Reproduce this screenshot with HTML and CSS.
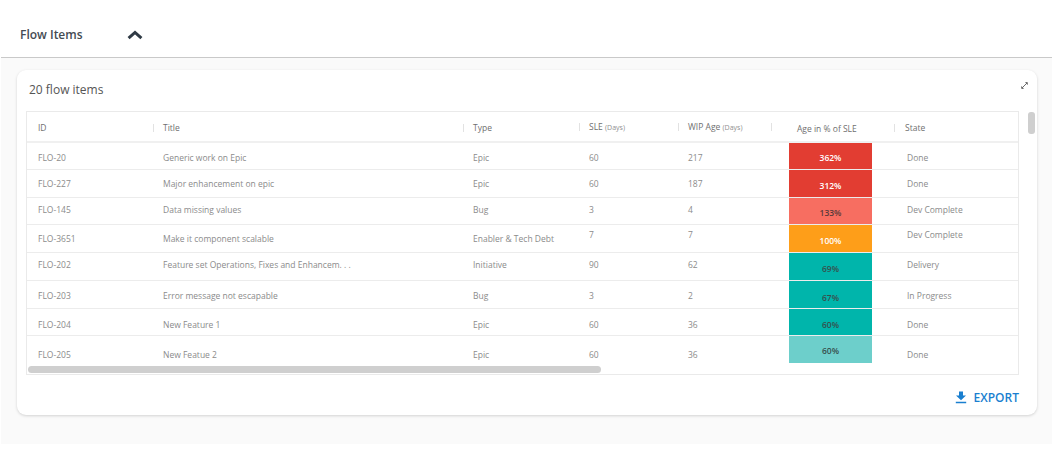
FILE: index.html
```html
<!DOCTYPE html>
<html lang="en">
<head>
<meta charset="utf-8">
<title>Flow Items</title>
<link rel="stylesheet" href="styles.css">
</head>
<body>
<header class="topbar">
  <h1 class="topbar-title">Flow Items</h1>
  <svg class="chevron" width="16" height="10" viewBox="0 0 16 10"><path d="M1.6 8.2 L8 2.4 L14.4 8.2" fill="none" stroke="#2f3a45" stroke-width="3"/></svg>
</header>
<main class="stage">
  <section class="card">
    <div class="card-head">
      <h2 class="card-title">20 flow items</h2>
      <svg class="expand" width="7" height="7" viewBox="0 0 8 8"><path d="M4.6 0.4H7.6V3.4ZM0.4 4.6V7.6H3.4Z" fill="#444"/><path d="M6 2L2 6" stroke="#444" stroke-width="0.9"/></svg>
    </div>
    <div class="table-wrap">
      <div class="table">
        <div class="row head">
          <div class="cell c-id">ID</div>
          <div class="cell sep">Title</div>
          <div class="cell sep">Type</div>
          <div class="cell sep">SLE <small>(Days)</small></div>
          <div class="cell sep">WIP Age <small>(Days)</small></div>
          <div class="cell sep c-agehead">Age in % of SLE</div>
          <div class="cell sep">State</div>
        </div>
        <div class="row h27 low2">
          <div class="cell c-id">FLO-20</div><div class="cell">Generic work on Epic</div><div class="cell">Epic</div><div class="cell">60</div><div class="cell">217</div>
          <div class="pct red light">362%</div><div class="cell c-state">Done</div>
        </div>
        <div class="row h28">
          <div class="cell c-id">FLO-227</div><div class="cell">Major enhancement on epic</div><div class="cell">Epic</div><div class="cell">60</div><div class="cell">187</div>
          <div class="pct red light">312%</div><div class="cell c-state">Done</div>
        </div>
        <div class="row h27 high1">
          <div class="cell c-id">FLO-145</div><div class="cell">Data missing values</div><div class="cell">Bug</div><div class="cell">3</div><div class="cell">4</div>
          <div class="pct salmon">133%</div><div class="cell c-state">Dev Complete</div>
        </div>
        <div class="row h28">
          <div class="cell c-id">FLO-3651</div><div class="cell">Make it component scalable</div><div class="cell">Enabler &amp; Tech Debt</div><div class="cell high4">7</div><div class="cell high4">7</div>
          <div class="pct orange light">100%</div><div class="cell c-state high4">Dev Complete</div>
        </div>
        <div class="row h28 high1">
          <div class="cell c-id">FLO-202</div><div class="cell">Feature set Operations, Fixes and Enhancem. . .</div><div class="cell">Initiative</div><div class="cell">90</div><div class="cell">62</div>
          <div class="pct teal">69%</div><div class="cell c-state">Delivery</div>
        </div>
        <div class="row h28 low1">
          <div class="cell c-id">FLO-203</div><div class="cell">Error message not escapable</div><div class="cell">Bug</div><div class="cell">3</div><div class="cell">2</div>
          <div class="pct teal">67%</div><div class="cell c-state">In Progress</div>
        </div>
        <div class="row h27 low3">
          <div class="cell c-id">FLO-204</div><div class="cell">New Feature 1</div><div class="cell">Epic</div><div class="cell">60</div><div class="cell">36</div>
          <div class="pct teal">60%</div><div class="cell c-state">Done</div>
        </div>
        <div class="row last">
          <div class="cell c-id">FLO-205</div><div class="cell">New Featue 2</div><div class="cell">Epic</div><div class="cell">60</div><div class="cell">36</div>
          <div class="pct mint">60%</div><div class="cell c-state">Done</div>
        </div>
      </div>
      <div class="hbar"></div>
      <div class="vbar"></div>
    </div>
    <div class="card-foot">
      <a class="export" href="#">
        <svg width="12" height="13" viewBox="0 0 12 13"><path d="M4 0.5H8V4.5H11L6 9.2L1 4.5H4ZM0.8 10.8H11.2V12.2H0.8Z" fill="#1a7fd0"/></svg>
        EXPORT
      </a>
    </div>
  </section>
</main>
</body>
</html>
```
FILE: styles.css
```css
* { box-sizing: border-box; }
html, body { margin: 0; padding: 0; }
body {
  width: 1052px;
  height: 457px;
  background: #fff;
  font-family: "Open Sans", "Liberation Sans", sans-serif;
  color: #8b8b8b;
  overflow: hidden;
}
.topbar {
  height: 58px;
  display: flex;
  align-items: center;
  gap: 44px;
  padding: 12px 0 0 19px;
  border-bottom: 1px solid #c9c9c9;
  margin-left: 1px;
}
.topbar-title {
  margin: 0;
  font-size: 12px;
  font-weight: 600;
  color: #444b52;
}
.stage {
  height: 386px;
  background: #fafafa;
  margin-left: 1px;
  padding: 12px 15px 0 16px;
}
.card {
  height: 345px;
  background: #fff;
  border-radius: 9px;
  box-shadow: 0 1px 3px rgba(0, 0, 0, 0.16);
  padding: 0 18px 0 9px;
}
.card-head {
  height: 41px;
  display: flex;
  justify-content: space-between;
  padding: 11px 0 0 3px;
}
.card-title {
  margin: 0;
  font-size: 12px;
  line-height: 18px;
  font-weight: 400;
  color: #555;
}
.expand {
  margin: 1px -9px 0 0;
}
.table-wrap {
  position: relative;
  width: 993px;
  height: 264px;
  border: 1px solid #eaeaea;
}
.table {
  display: flex;
  flex-direction: column;
}
.row {
  display: grid;
  grid-template-columns: 126px 310px 116px 99px 93px 123px 124px;
  align-items: center;
  border-bottom: 1px solid #ececec;
  font-size: 8.5px;
}
.row.head { height: 31px; color: #6f6f6f; border-bottom-width: 2px; border-bottom-color: #f0f0f0; }
.row.h27 { height: 27px; }
.row.h28 { height: 28px; }
.row.last { height: 39px; border-bottom: 0; align-items: start; }
.row.last .cell { padding-top: 13px; }
.cell {
  padding-left: 10px;
  line-height: 12px;
  white-space: nowrap;
}
.head .cell { padding-top: 2px; }
.low1 .cell { padding-top: 2px; }
.low2 .cell { padding-top: 4px; }
.low3 .cell { padding-top: 6px; }
.high1 .cell { padding-bottom: 3px; }
.row .high4 { padding-bottom: 8px; }
.row .c-id { padding-left: 11px; }
.row .c-state { padding-left: 13px; }
.head .c-agehead { padding-left: 26px; padding-top: 4px; }
.head .cell:last-child { padding-left: 11px; }
.sep { position: relative; }
.sep::before {
  content: "";
  position: absolute;
  left: 0;
  top: 4px;
  height: 8px;
  width: 1px;
  background: #e2e2e2;
}
small { font-size: 7px; color: #8f8f8f; }
.pct {
  align-self: stretch;
  width: 83px;
  margin-left: 18px;
  display: flex;
  align-items: center;
  justify-content: center;
  padding-top: 3px;
  font-size: 8.5px;
  font-weight: 600;
  color: #37504e;
}
.low1 .pct, .low3 .pct { padding-top: 5px; }
.last .pct { height: 27px; padding-top: 1px; }
.light { color: #fff; }
.red { background: #e23d32; }
.salmon { background: #f76e61; color: #5a3b3a; }
.orange { background: #fe9e19; }
.teal { background: #00b5ab; }
.mint { background: #6dcfcb; }
.hbar {
  position: absolute;
  left: 1px;
  bottom: 1px;
  width: 573px;
  height: 7px;
  border-radius: 4px;
  background: #cfcfcf;
}
.vbar {
  position: absolute;
  left: 1001px;
  top: 0;
  width: 7px;
  height: 22px;
  border-radius: 3px;
  background: #cfcfcf;
}
.card-foot {
  display: flex;
  justify-content: flex-end;
  width: 993px;
  padding-top: 14px;
}
.export {
  display: flex;
  align-items: center;
  gap: 7px;
  font-size: 12px;
  line-height: 17px;
  font-weight: 600;
  color: #1a7fd0;
  text-decoration: none;
}
```
